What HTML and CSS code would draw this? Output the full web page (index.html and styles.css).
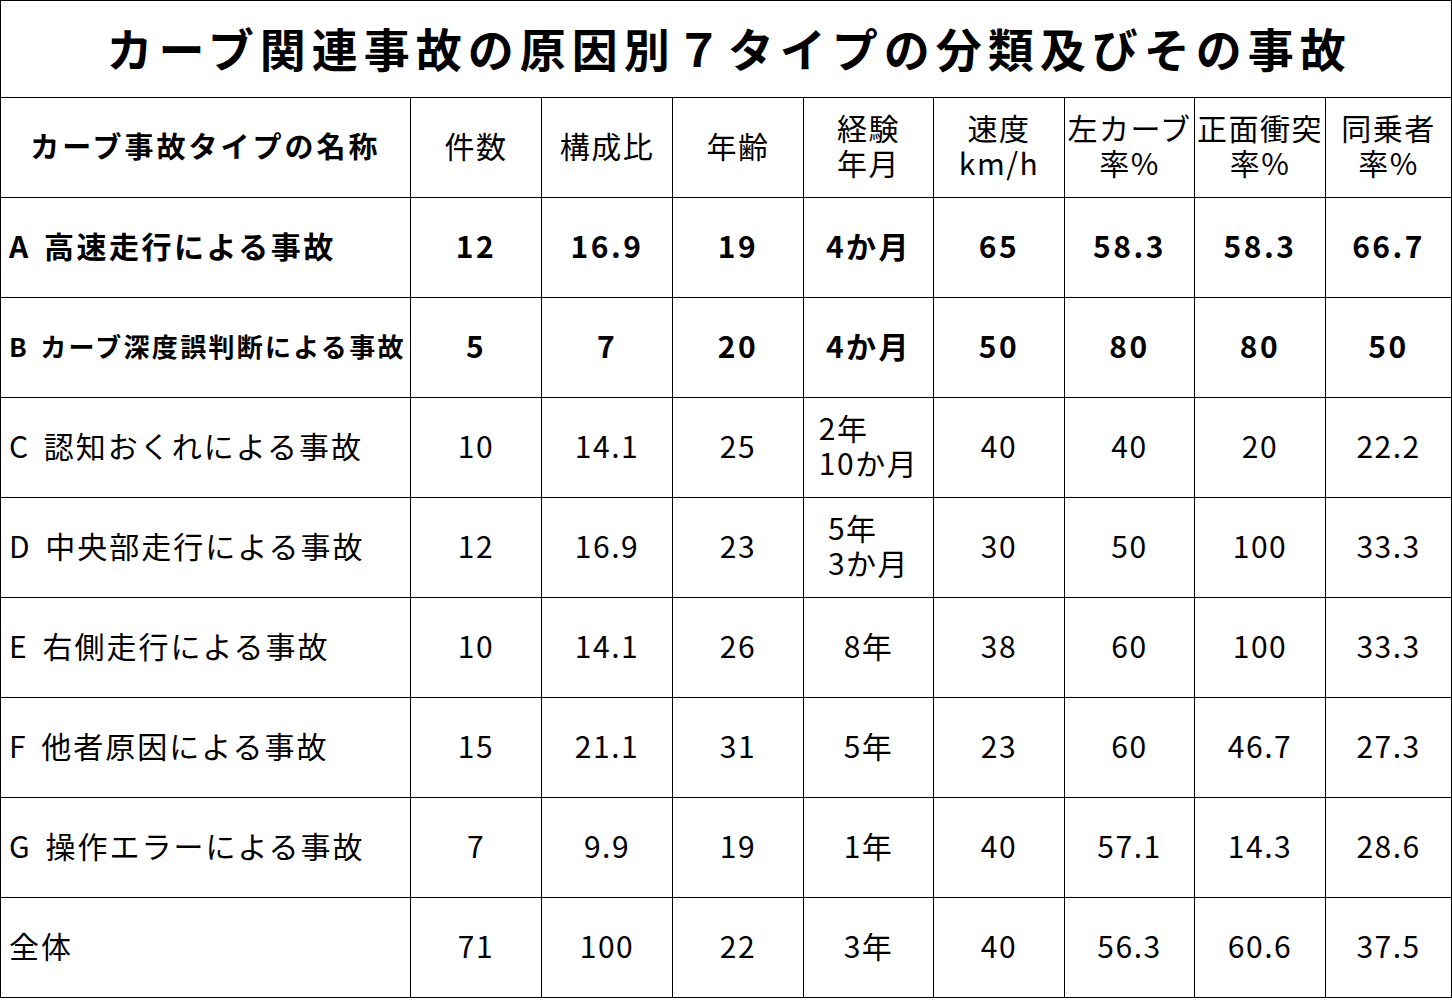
FILE: index.html
```html
<!DOCTYPE html>
<html lang="ja">
<head>
<meta charset="utf-8">
<title>カーブ関連事故の原因別７タイプの分類及びその事故</title>
<link rel="stylesheet" href="styles.css">
</head>
<body>
<table class="report">
  <colgroup>
    <col class="c-name">
    <col class="c-num">
    <col class="c-num">
    <col class="c-num">
    <col class="c-num2">
    <col class="c-num">
    <col class="c-num2">
    <col class="c-num">
    <col class="c-last">
  </colgroup>
  <thead>
    <tr class="r-title">
      <th colspan="9" class="title">カーブ関連事故の原因別７タイプの分類及びその事故</th>
    </tr>
    <tr class="r-head">
      <th class="h-name">カーブ事故タイプの名称</th>
      <th>件数</th>
      <th>構成比</th>
      <th>年齢</th>
      <th><span class="two c">経験<br>年月</span></th>
      <th><span class="two c">速度<br>km/h</span></th>
      <th><span class="two c">左カーブ<br>率%</span></th>
      <th><span class="two c">正面衝突<br>率%</span></th>
      <th><span class="two c">同乗者<br>率%</span></th>
    </tr>
  </thead>
  <tbody>
    <tr class="row bold">
      <td class="name">A 高速走行による事故</td>
      <td>12</td><td>16.9</td><td>19</td><td>4か月</td><td>65</td><td>58.3</td><td>58.3</td><td>66.7</td>
    </tr>
    <tr class="row bold">
      <td class="name small">B カーブ深度誤判断による事故</td>
      <td>5</td><td>7</td><td>20</td><td>4か月</td><td>50</td><td>80</td><td>80</td><td>50</td>
    </tr>
    <tr class="row">
      <td class="name">C 認知おくれによる事故</td>
      <td>10</td><td>14.1</td><td>25</td><td><span class="two">2年<br>10か月</span></td><td>40</td><td>40</td><td>20</td><td>22.2</td>
    </tr>
    <tr class="row">
      <td class="name">D 中央部走行による事故</td>
      <td>12</td><td>16.9</td><td>23</td><td><span class="two">5年<br>3か月</span></td><td>30</td><td>50</td><td>100</td><td>33.3</td>
    </tr>
    <tr class="row">
      <td class="name">E 右側走行による事故</td>
      <td>10</td><td>14.1</td><td>26</td><td>8年</td><td>38</td><td>60</td><td>100</td><td>33.3</td>
    </tr>
    <tr class="row">
      <td class="name">F 他者原因による事故</td>
      <td>15</td><td>21.1</td><td>31</td><td>5年</td><td>23</td><td>60</td><td>46.7</td><td>27.3</td>
    </tr>
    <tr class="row">
      <td class="name">G 操作エラーによる事故</td>
      <td>7</td><td>9.9</td><td>19</td><td>1年</td><td>40</td><td>57.1</td><td>14.3</td><td>28.6</td>
    </tr>
    <tr class="row">
      <td class="name">全体</td>
      <td>71</td><td>100</td><td>22</td><td>3年</td><td>40</td><td>56.3</td><td>60.6</td><td>37.5</td>
    </tr>
  </tbody>
</table>
</body>
</html>
```

FILE: styles.css
```css
html, body {
  margin: 0;
  padding: 0;
  background: #ffffff;
}

body {
  font-family: "Noto Sans CJK JP", "Noto Sans", sans-serif;
  color: #000000;
}

.report {
  border-collapse: collapse;
  table-layout: fixed;
  width: 1451px;
}

.c-name { width: 410px; }
.c-num { width: 131px; }
.c-num2 { width: 130px; }
.c-last { width: 126px; }

.report th,
.report td {
  border: 1px solid #000000;
  padding: 0 0 5px 0;
  text-align: center;
  vertical-align: middle;
  font-size: 30px;
  font-weight: 400;
  letter-spacing: 1.5px;
  line-height: 35px;
  white-space: nowrap;
}

.r-title { height: 97px; }
.report th.title {
  font-size: 46px;
  font-weight: 700;
  letter-spacing: 6px;
  line-height: 52px;
  padding: 0 0 4px 6px;
}

.r-head { height: 100px; }
.report th.h-name {
  font-weight: 700;
  font-size: 29px;
  letter-spacing: 3px;
}

.row { height: 100px; }

.row.bold td {
  font-weight: 700;
  letter-spacing: 2.5px;
}

.report td.name {
  text-align: left;
  padding-left: 8px;
  letter-spacing: 2px;
  word-spacing: 5px;
}

.row.bold td.name {
  letter-spacing: 2.5px;
  word-spacing: 4px;
}

.row.bold td.name.small {
  font-size: 26px;
  letter-spacing: 2.3px;
  word-spacing: 3px;
}

.two {
  display: inline-block;
  text-align: left;
}

.two.c {
  text-align: center;
}
```
